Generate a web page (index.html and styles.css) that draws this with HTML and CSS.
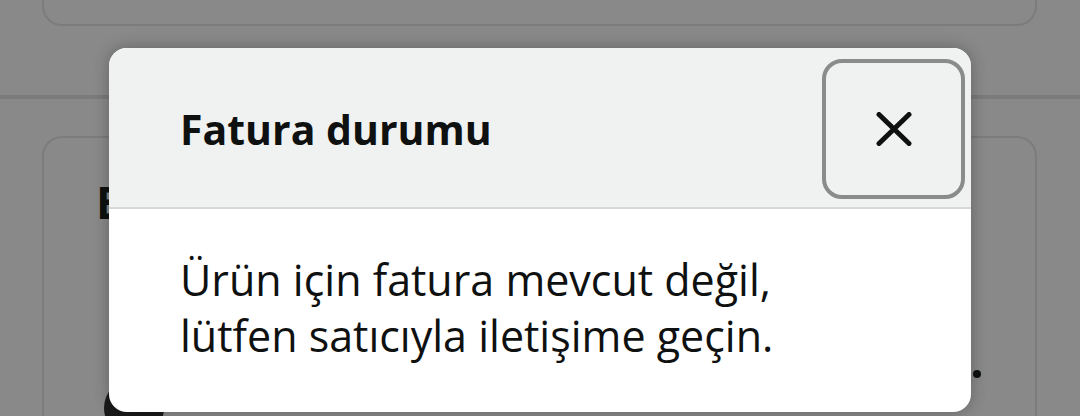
FILE: index.html
```html
<!DOCTYPE html>
<html lang="tr">
<head>
<meta charset="utf-8">
<title>Fatura durumu</title>
<link rel="stylesheet" href="styles.css">
</head>
<body>
<div class="page">
  <div class="card card-top"></div>
  <div class="divider"></div>
  <div class="card card-main">
    <div class="card-title">Emre</div>
    <div class="card-dot"></div>
    <div class="card-blob"></div>
  </div>
</div>

<div class="modal" role="dialog" aria-labelledby="modal-title">
  <div class="modal-header">
    <h2 class="modal-title" id="modal-title">Fatura durumu</h2>
    <button class="close-btn" aria-label="Kapat">
      <svg class="close-icon" viewBox="0 0 36 34" width="36" height="34">
        <path d="M3 2.5 L33 31.5 M33 2.5 L3 31.5" stroke="#0f1111" stroke-width="5" stroke-linecap="round" fill="none"/>
      </svg>
    </button>
  </div>
  <div class="modal-body">
    <p class="modal-text">Ürün için fatura mevcut değil,<br>lütfen satıcıyla iletişime geçin.</p>
  </div>
</div>
</body>
</html>
```

FILE: styles.css
```css
* { box-sizing: border-box; }

html, body {
  margin: 0;
  padding: 0;
  height: 100%;
  overflow: hidden;
}

body {
  background: #888988;
  font-family: "Open Sans", "Noto Sans", "Liberation Sans", sans-serif;
  color: #0f1111;
}

.page {
  display: flex;
  flex-direction: column;
  width: 1080px;
  height: 416px;
  overflow: hidden;
}

.card {
  margin-left: 42px;
  width: 995px;
  border: 2px solid #7b7c7b;
}

.card-top {
  height: 26px;
  flex-shrink: 0;
  border-top: none;
  border-radius: 0 0 20px 20px;
}

.divider {
  margin-top: 69px;
  height: 4px;
  flex-shrink: 0;
  background: #7a7b7a;
}

.card-main {
  margin-top: 37px;
  height: 280px;
  flex-shrink: 0;
  border-radius: 20px 20px 0 0;
  border-bottom: none;
  position: relative;
  overflow: hidden;
  padding: 36px 0 0 52px;
}

.card-title {
  font-weight: 700;
  font-size: 44px;
  line-height: 56px;
  color: #0f1111;
}

.card-dot {
  position: absolute;
  left: 929px;
  top: 232px;
  width: 8px;
  height: 8px;
  border-radius: 50%;
  background: #0f1111;
}

.card-blob {
  position: absolute;
  left: 60px;
  top: 240px;
  width: 60px;
  height: 60px;
  border-radius: 50%;
  background: #1a1a1a;
}

.modal {
  position: absolute;
  left: 109px;
  top: 48px;
  width: 862px;
  height: 364px;
  border-radius: 18px;
  overflow: hidden;
  background: #ffffff;
  box-shadow: 0 0 16px rgba(0, 0, 0, 0.28);
  display: flex;
  flex-direction: column;
}

.modal-header {
  display: flex;
  align-items: center;
  background: #f0f2f2;
  border-bottom: 2px solid #d5d9d9;
  padding: 11px 6px 8px 71px;
}

.modal-title {
  flex: 1;
  margin: 0;
  font-size: 41px;
  font-weight: 700;
  line-height: 56px;
  color: #0f1111;
}

.close-btn {
  width: 143px;
  height: 140px;
  border: 4px solid #8a8c8c;
  border-radius: 20px;
  background: #f0f2f2;
  display: flex;
  align-items: center;
  justify-content: center;
  padding: 0;
  margin: 0;
}

.close-icon {
  display: block;
}

.modal-body {
  flex: 1;
  padding: 43px 40px 0 71px;
}

.modal-text {
  margin: 0;
  font-size: 43px;
  line-height: 56px;
  color: #0f1111;
}
```
